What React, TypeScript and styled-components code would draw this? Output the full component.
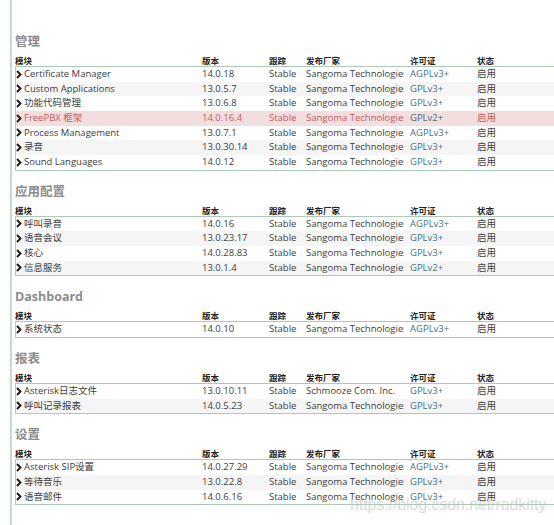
import React from "react";
import styled, { createGlobalStyle } from "styled-components";

const Global = createGlobalStyle`
  html, body { margin: 0; padding: 0; background: #fff; overflow: hidden; }
  body { font-family: "Open Sans", "Noto Sans CJK SC", sans-serif; }
`;

const Page = styled.div`
  position: relative;
  width: 554px;
  height: 525px;
  overflow: hidden;
  padding-left: 10px;
  box-sizing: border-box;
`;

const Main = styled.div`
  border-left: 2px solid #c3dccf;
  padding-left: 3px;
  padding-top: 21px;
  height: 100%;
  box-sizing: border-box;
  width: 620px;
`;

const Section = styled.section`
  padding-top: 12px;
`;

const Title = styled.h2`
  margin: 0;
  height: 18px;
  line-height: 18px;
  font-size: 12.5px;
  font-weight: 700;
  color: #8c8c8c;
  font-family: "Open Sans", "Noto Sans CJK SC", sans-serif;
`;

const COLS = "186px 67px 37px 104px 67px 1fr";

const HeaderRow = styled.div`
  display: grid;
  grid-template-columns: ${COLS};
  margin-top: 3px;
  height: 12px;
  line-height: 12px;
  padding-left: 1px;
  font-size: 8.5px;
  font-weight: 700;
  color: #222;
  font-family: "Noto Sans CJK SC", sans-serif;
  & > span:first-child { margin-left: -1px; }
`;

const Body = styled.div`
  border: 1px solid #a9cbb8;
  border-right: none;
`;

const Row = styled.div<{ $alt?: boolean; $danger?: boolean }>`
  display: grid;
  grid-template-columns: ${COLS};
  height: 14.67px;
  line-height: 14.67px;
  font-size: 9.5px;
  color: ${(p) => (p.$danger ? "#c0605e" : "#3d3d3d")};
  background: ${(p) => (p.$danger ? "#f2dede" : p.$alt ? "#f5f5f5" : "#fff")};
  font-family: "Open Sans", "Noto Sans CJK SC", sans-serif;
`;

const Cell = styled.span<{ $clip?: number }>`
  white-space: nowrap;
  overflow: hidden;
  ${(p) => (p.$clip ? `max-width: ${p.$clip}px;` : "")}
`;

const ModuleCell = styled.span`
  display: flex;
  align-items: center;
  gap: 2px;
  white-space: nowrap;
  overflow: hidden;
`;

const License = styled.span<{ $danger?: boolean }>`
  color: ${(p) => (p.$danger ? "#4a6f78" : "#3f7480")};
  white-space: nowrap;
`;

const Watermark = styled.div`
  position: absolute;
  left: 350px;
  top: 496px;
  line-height: 18px;
  font-family: "Liberation Sans", Arial, sans-serif;
  font-size: 16px;
  color: rgba(185, 185, 185, 0.55);
  letter-spacing: -0.1px;
  white-space: nowrap;
  pointer-events: none;
`;

const Chevron = () => (
  <svg width="6" height="9" viewBox="0 0 6 9" style={{ flex: "none" }}>
    <path d="M1 1 L4.5 4.5 L1 8" stroke="#1a1a1a" strokeWidth="1.9" fill="none" />
  </svg>
);

type Mod = [string, string, string, string, string?];

const data: { title: string; rows: Mod[] }[] = [
  {
    title: "管理",
    rows: [
      ["Certificate Manager", "14.0.18", "Sangoma Technologies", "AGPLv3+"],
      ["Custom Applications", "13.0.5.7", "Sangoma Technologies", "GPLv3+"],
      ["功能代码管理", "13.0.6.8", "Sangoma Technologies", "GPLv3+"],
      ["FreePBX 框架", "14.0.16.4", "Sangoma Technologies", "GPLv2+", "danger"],
      ["Process Management", "13.0.7.1", "Sangoma Technologies", "AGPLv3+"],
      ["录音", "13.0.30.14", "Sangoma Technologies", "GPLv3+"],
      ["Sound Languages", "14.0.12", "Sangoma Technologies", "GPLv3+"],
    ],
  },
  {
    title: "应用配置",
    rows: [
      ["呼叫录音", "14.0.16", "Sangoma Technologies", "AGPLv3+"],
      ["语音会议", "13.0.23.17", "Sangoma Technologies", "GPLv3+"],
      ["核心", "14.0.28.83", "Sangoma Technologies", "GPLv3+"],
      ["信息服务", "13.0.1.4", "Sangoma Technologies", "GPLv2+"],
    ],
  },
  {
    title: "Dashboard",
    rows: [["系统状态", "14.0.10", "Sangoma Technologies", "AGPLv3+"]],
  },
  {
    title: "报表",
    rows: [
      ["Asterisk日志文件", "13.0.10.11", "Schmooze Com. Inc.", "GPLv3+"],
      ["呼叫记录报表", "14.0.5.23", "Sangoma Technologies", "GPLv3+"],
    ],
  },
  {
    title: "设置",
    rows: [
      ["Asterisk SIP设置", "14.0.27.29", "Sangoma Technologies", "AGPLv3+"],
      ["等待音乐", "13.0.22.8", "Sangoma Technologies", "GPLv3+"],
      ["语音邮件", "14.0.6.16", "Sangoma Technologies", "GPLv3+"],
    ],
  },
];

export default function App() {
  return (
    <Page>
      <Global />
      <Main>
        {data.map((sec) => (
          <Section key={sec.title}>
            <Title>{sec.title}</Title>
            <HeaderRow>
              <span>模块</span>
              <span>版本</span>
              <span>跟踪</span>
              <span>发布厂家</span>
              <span>许可证</span>
              <span>状态</span>
            </HeaderRow>
            <Body>
              {sec.rows.map((r, i) => {
                const danger = r[4] === "danger";
                return (
                  <Row key={r[0]} $alt={i % 2 === 1} $danger={danger}>
                    <ModuleCell>
                      <Chevron />
                      {r[0]}
                    </ModuleCell>
                    <Cell>{r[1]}</Cell>
                    <Cell>Stable</Cell>
                    <Cell $clip={98}>{r[2]}</Cell>
                    <License $danger={danger}>{r[3]}</License>
                    <Cell>启用</Cell>
                  </Row>
                );
              })}
            </Body>
          </Section>
        ))}
      </Main>
      <Watermark>https://blog.csdn.net/radkitty</Watermark>
    </Page>
  );
}
